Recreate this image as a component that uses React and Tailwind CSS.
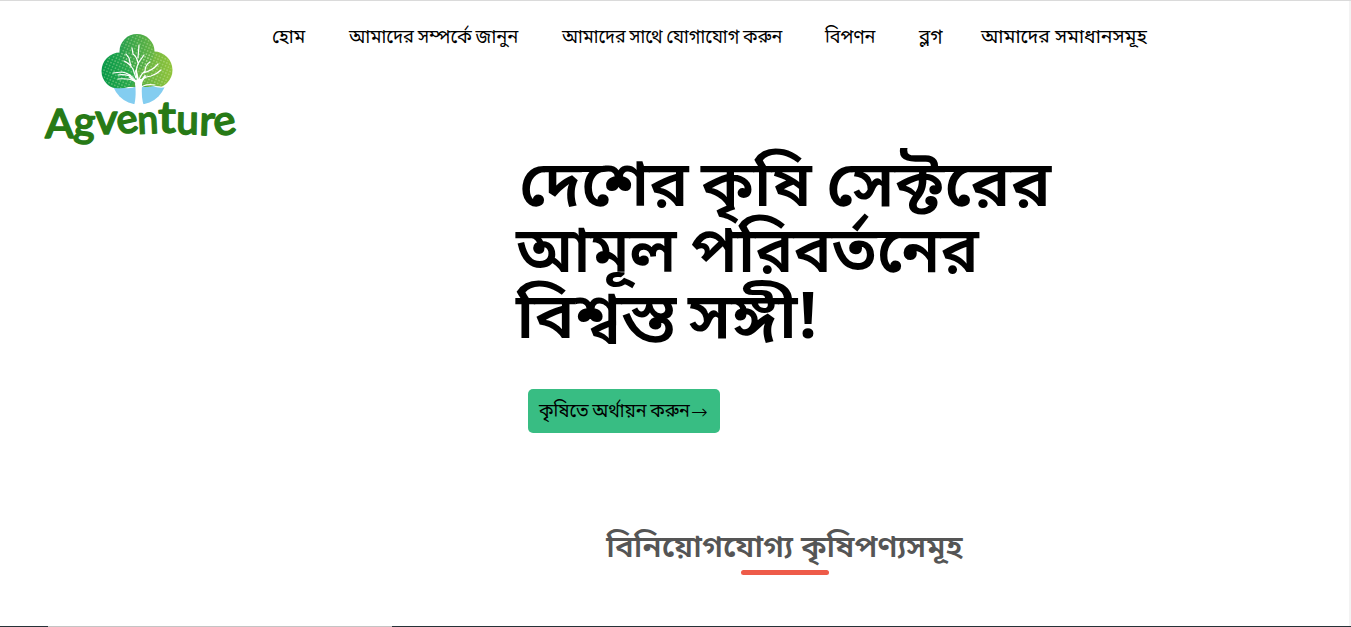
const navItems = [
  { label: 'হোম', place: 'ml-[272px] w-[77px]', fit: 'scale-x-[.985]' },
  { label: 'আমাদের সম্পর্কে জানুন', place: 'w-[213px]', fit: '[word-spacing:-1px] scale-x-[.965]' },
  { label: 'আমাদের সাথে যোগাযোগ করুন', place: 'w-[263px]', fit: '[word-spacing:-1px] scale-x-[.944]' },
  { label: 'বিপণন', place: 'w-[94px]', fit: 'scale-x-[.947]' },
  { label: 'ব্লগ', place: 'w-[62px]', fit: '' },
  { label: 'আমাদের সমাধানসমূহ', place: 'w-[180px]', fit: 'scale-x-[1.022]' },
];

const headline = [
  { indent: 'pl-[3px]', words: [
    { text: 'দেশের', place: 'w-[182px]', fit: 'scale-x-[1.025]' },
    { text: 'কৃষি', place: 'w-[125px]', fit: 'scale-x-[1.015]' },
    { text: 'সেক্টরের', place: '', fit: 'scale-x-[1.053]' },
  ] },
  { indent: '', words: [
    { text: 'আমূল', place: 'w-[175px]', fit: 'scale-x-[.983]' },
    { text: 'পরিবর্তনের', place: '', fit: 'scale-x-[.997]' },
  ] },
  { indent: '', words: [
    { text: 'বিশ্বস্ত', place: 'w-[172px]', fit: 'scale-x-[1.053]' },
    { text: 'সঙ্গী!', place: '', fit: 'scale-x-[1.07]' },
  ] },
];

const letters = [
  ['A', 45, 137, 0, 41, 1.03], ['g', 73, 135, 3, 42, 0.98], ['v', 95, 133, 0, 42, 1.03],
  ['e', 119, 134, -12, 41, 0.98], ['n', 138, 133, -3, 40, 0.93], ['t', 158, 132, 0, 44, 1.12],
  ['u', 176, 133, 1, 42, 0.96], ['r', 199, 134, 2, 42, 1], ['e', 216, 136, -12, 42, 1],
];

function Logo() {
  return (
    <svg className="absolute left-0 top-0" width="250" height="160" viewBox="0 0 250 160" aria-label="Agventure">
      <defs>
        <linearGradient id="left" x1="0" x2="1"><stop stopColor="#079849" /><stop offset="1" stopColor="#36ad4e" /></linearGradient>
        <linearGradient id="top" x1="0" x2="1"><stop stopColor="#249e4e" /><stop offset="1" stopColor="#68b543" /></linearGradient>
        <linearGradient id="right" x1="0" x2="1"><stop stopColor="#57ad43" /><stop offset="1" stopColor="#91c43c" /></linearGradient>
        <pattern id="dots" width="3.2" height="3.2" patternUnits="userSpaceOnUse" patternTransform="rotate(24)">
          <circle cx="1.6" cy="1.6" r=".6" fill="#d9f2bd" opacity=".8" />
        </pattern>
        <clipPath id="water"><path d="M105 86q8-3 16 0t16-1 16 0 22-1v25h-70Z" /></clipPath>
        <clipPath id="crown"><path d="M95 28h84v57q-8 3-16 1t-14 0h-20q-7 2-14 1t-20-3Z" /></clipPath>
      </defs>
      <circle cx="139" cy="76" r="27.5" fill="#83cdf0" clipPath="url(#water)" />
      <g clipPath="url(#crown)">
        <path d="M119 52h36l-6 34h-20Z" fill="#4aaa48" />
        <circle cx="120" cy="70" r="18.5" fill="url(#left)" />
        <circle cx="154" cy="69" r="18.5" fill="url(#right)" />
        <circle cx="137" cy="50.5" r="17.5" fill="url(#top)" />
        <g fill="url(#dots)">
          <circle cx="120" cy="70" r="17.5" /><circle cx="154" cy="69" r="17.5" /><circle cx="137" cy="50.5" r="16.5" />
        </g>
      </g>
      <path d="M134 105c2-7 2-16 1-22q0-3 2-5h4q2 2 1 6-1 13 2 21Z" fill="#fff" />
      <g fill="none" stroke="#fff" strokeLinecap="round" strokeLinejoin="round" strokeWidth="1.2">
        <path d="M136 80q-6-8-14-9l-9 1m17 3q-7-2-12-1m17 6q-7-3-17-2m18-1-3-9q-4-6-9-8m7 6-2-9-3-4m11 23q-2-8 2-15l5-7m-6 8q-1-6-5-9l-1-6m6 10 1-13m-1 38q2-8 7-12 0-6 5-9m-7 11q9-2 15-9m-21 21q4-8 14-9 6-2 10-6m-24 20q7-7 18-5" />
        <path d="m139 84-3-14m4 13 5-8m-8 7-7-6" strokeWidth="2" />
      </g>
      <g fill="#277a16" stroke="#277a16" strokeWidth="1.3" strokeLinejoin="round" strokeLinecap="round" fontFamily="Lato, 'Liberation Sans', sans-serif" fontWeight="600">
        {letters.map(([letter, x, y, tilt, size, stretch], index) => (
          <text key={index} fontSize={size} transform={`translate(${x} ${y}) rotate(${tilt}) scale(${stretch} 1)`}>{letter}</text>
        ))}
      </g>
    </svg>
  );
}

export default function App() {
  return (
    <div className="relative flex h-[627px] w-full flex-col overflow-hidden border-t border-[#dadada] bg-white font-['Noto_Sans_Bengali','Noto_Sans',sans-serif] text-black">
      <header className="h-[140px] shrink-0">
        <Logo />
        <nav className="flex pt-[23px] text-[19px] leading-[30px]">
          {navItems.map((item) => (
            <a key={item.label} className={`${item.place} shrink-0 whitespace-nowrap`}>
              <span className={`${item.fit} inline-block origin-left`}>{item.label}</span>
            </a>
          ))}
        </nav>
      </header>
      <main>
        <h1 className="ml-[516px] mt-[16px] h-[198px] whitespace-nowrap text-[64px] font-semibold leading-[66px]">
          {headline.map((line, index) => (
            <span key={index} className={`${line.indent} flex`}>
              {line.words.map((word) => (
                <span key={word.text} className={`${word.place} shrink-0`}>
                  <span className={`${word.fit} inline-block origin-left`}>{word.text}</span>{' '}
                </span>
              ))}
            </span>
          ))}
        </h1>
        <button className="ml-[528px] mt-[34px] flex h-11 w-48 items-center whitespace-nowrap rounded-[5px] bg-[#38bd83] pl-[11px] pt-[5px] text-[19px]">
          <span className="w-[152px] text-left"><span className="inline-block origin-left scale-x-[.943] [word-spacing:-1px]">কৃষিতে অর্থায়ন করুন</span></span>
          <span className="font-['DejaVu_Sans',sans-serif] pb-[3px] text-[20px] font-extralight leading-none">→</span>
        </button>
        <section className="ml-[606px] mt-[91px] flex w-[357px] flex-col items-center">
          <h2 className="h-[46px] scale-x-[1.045] whitespace-nowrap pt-[3px] text-[30px] font-semibold leading-[44px] text-[#555]">বিনিয়োগযোগ্য কৃষিপণ্যসমূহ</h2>
          <div className="h-[5px] w-[88px] rounded-full bg-[#ee5b49]" />
        </section>
      </main>
      <div className="absolute bottom-0 right-0 top-0 w-0.5 bg-[#f3f3f3]" />
      <div className="absolute bottom-0 left-0 flex h-px w-full bg-[#263238]">
        <div className="ml-12 w-[344px] bg-[#c4c4c4]" />
      </div>
    </div>
  );
}
